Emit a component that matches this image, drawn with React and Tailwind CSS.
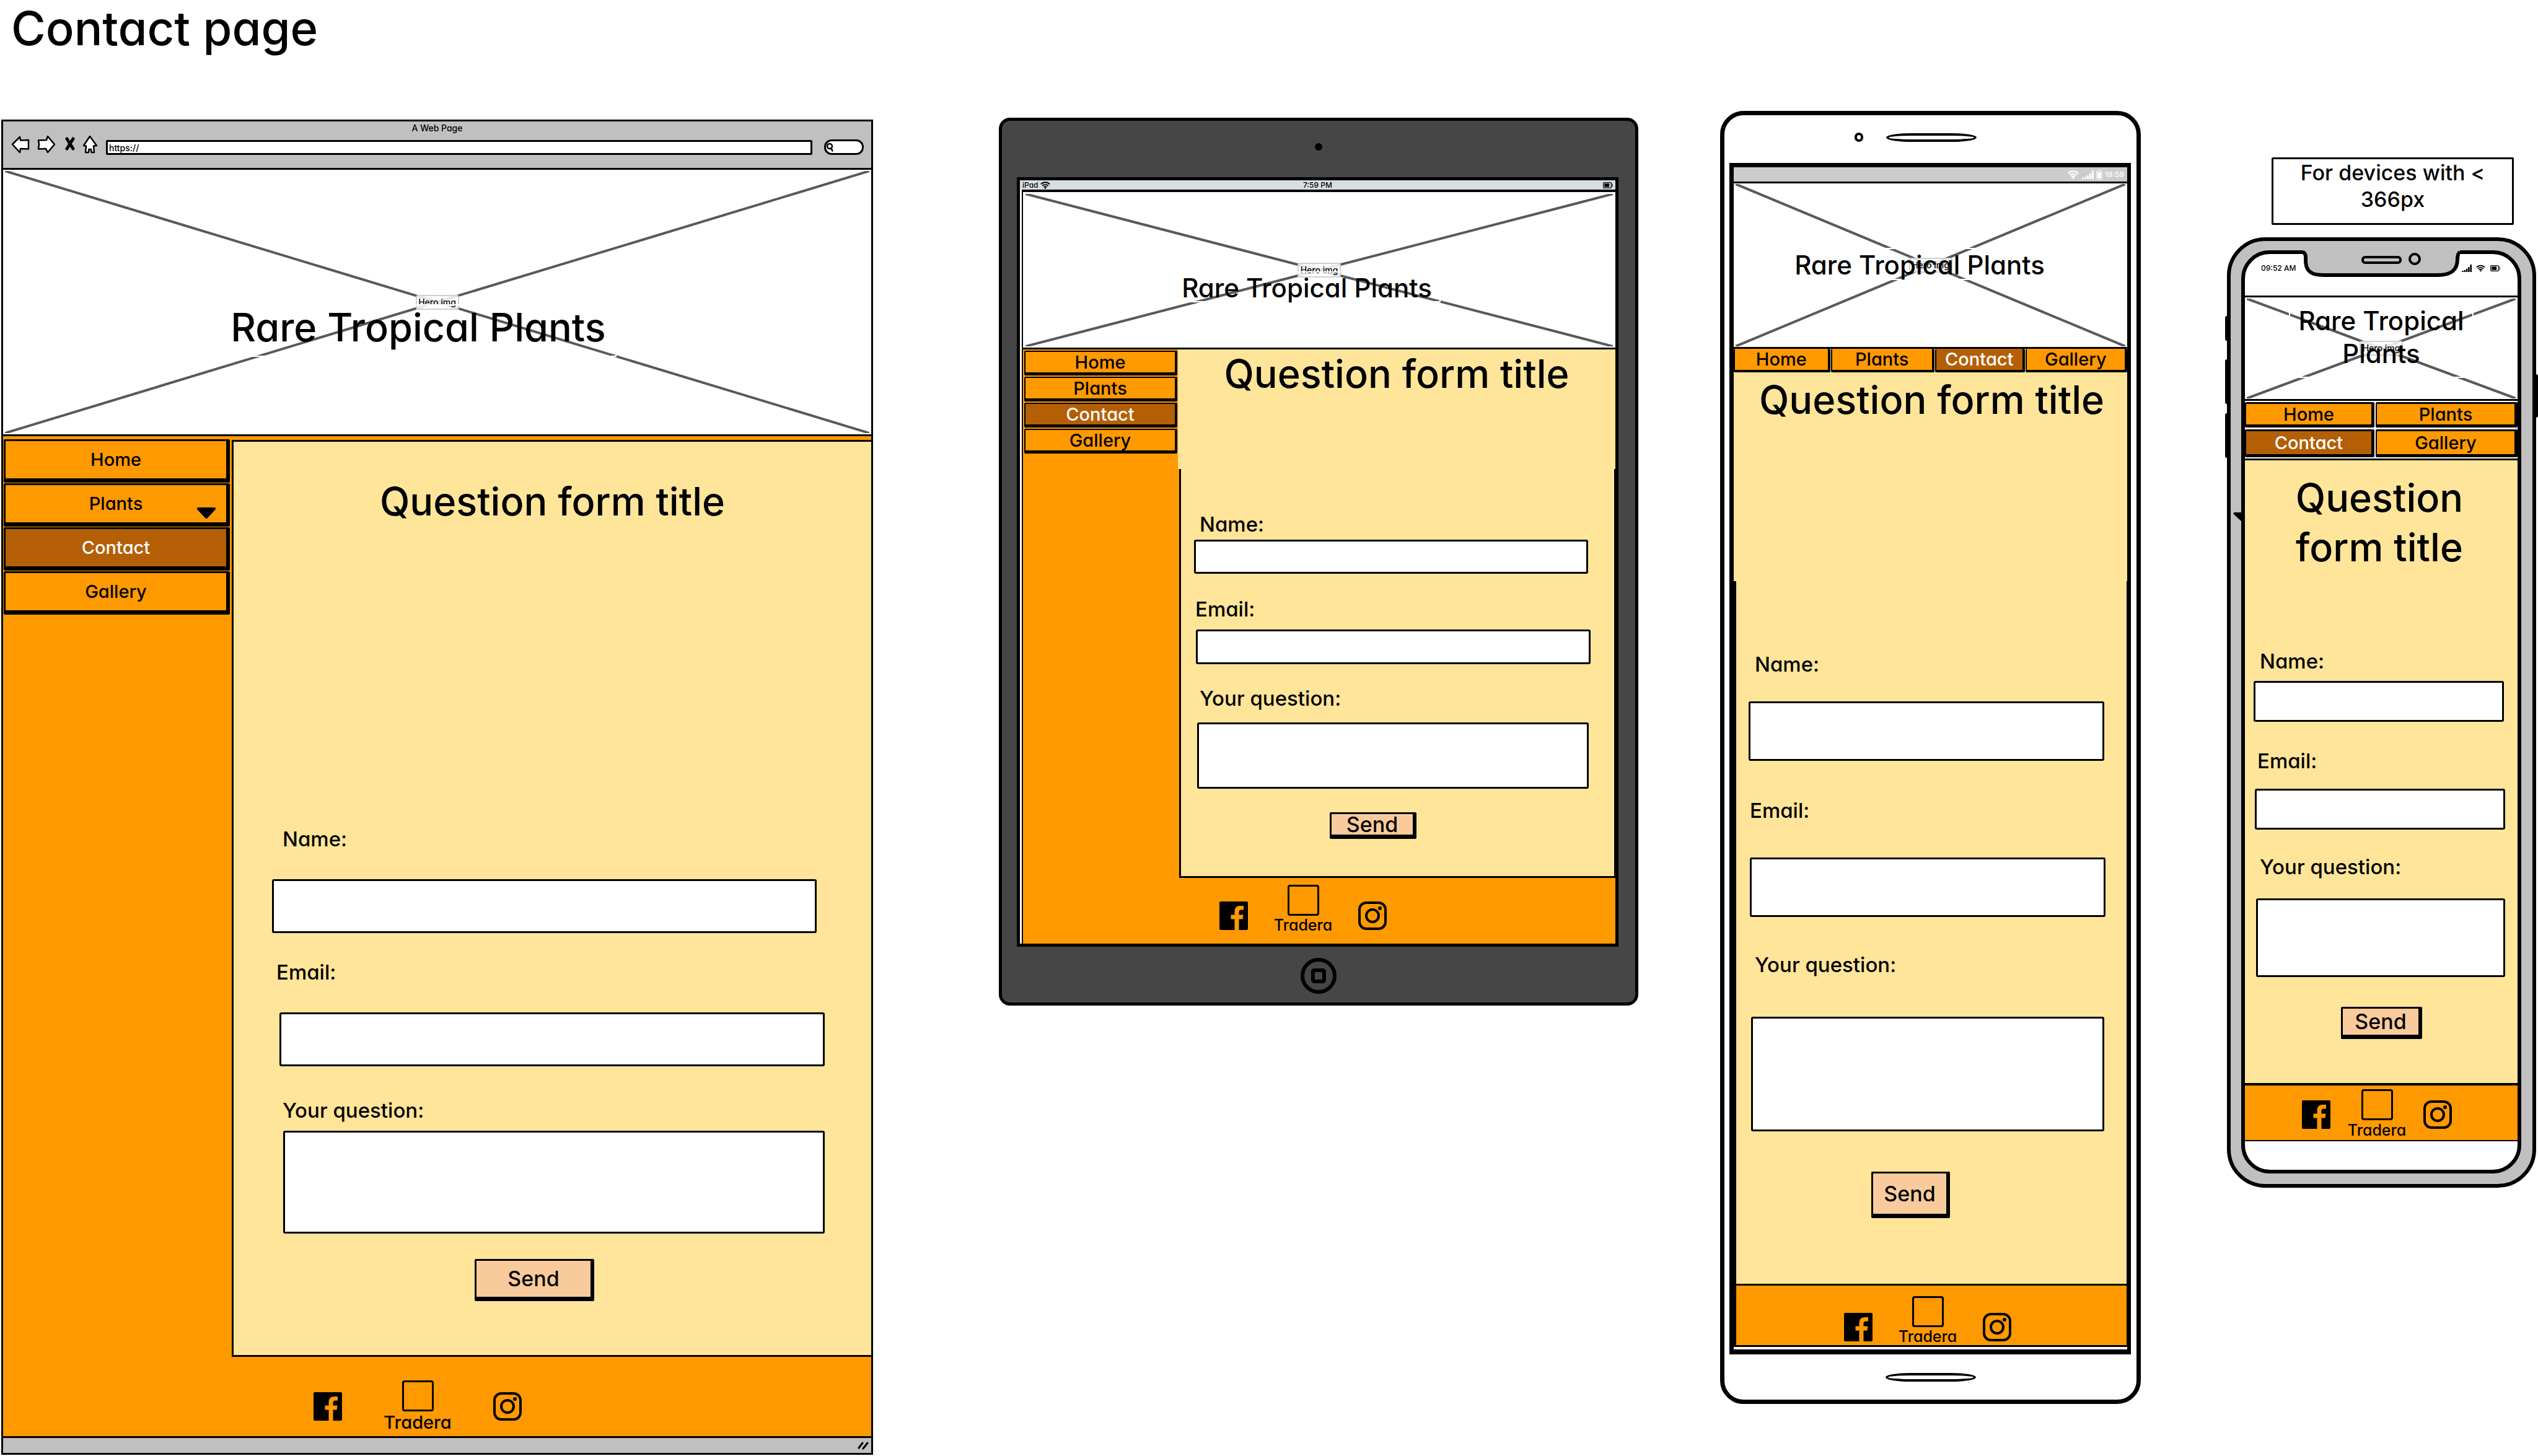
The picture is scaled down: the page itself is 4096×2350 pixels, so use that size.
import React from "react";

/* ---------- small drawings ---------- */

function FacebookIcon() {
  return (
    <svg viewBox="0 0 46 46" className="block size-[46px]" aria-hidden="true">
      <rect width="46" height="46" rx="2" fill="#000" />
      <path
        d="M24.500 46V28.500H18.500V21.500H24.500V16.500C24.500 10 28 7 33.500 7H39V13.500H35.500C32.500 13.500 31.500 15 31.500 17.500V21.500H38.500L37.500 28.500H31.500V46Z"
        fill="#ff9900"
      />
    </svg>
  );
}

function InstagramIcon() {
  return (
    <svg viewBox="0 0 46 46" className="block size-[46px]" fill="none" stroke="#000" aria-hidden="true">
      <rect x="2" y="2" width="42" height="42" rx="11" strokeWidth="4" />
      <circle cx="23" cy="23" r="10" strokeWidth="4" />
      <circle cx="35" cy="11" r="3" fill="#000" stroke="none" />
    </svg>
  );
}

function WifiIcon({ className }) {
  return (
    <svg viewBox="0 0 20 15" className={className} fill="none" stroke="currentColor" strokeWidth="2.400" aria-hidden="true">
      <path d="M1 5.500C6 .3 14 .3 19 5.500" />
      <path d="M4 8.700C7.500 5.200 12.500 5.200 16 8.700" />
      <path d="M6.800 11.400C8.700 9.600 11.300 9.600 13.200 11.400" />
      <circle cx="10" cy="13.400" r="1.500" fill="currentColor" stroke="none" />
    </svg>
  );
}

function SignalIcon({ className }) {
  return (
    <svg viewBox="0 0 19 14" className={className} fill="currentColor" aria-hidden="true">
      <path d="M0 12h3v2H0zM4 10.500h3V14H4zM8 8h3v6H8zM12 4.500h3V14h-3zM16 0h3v14h-3z" />
    </svg>
  );
}

function BatteryIcon({ className }) {
  return (
    <svg viewBox="0 0 16 10" className={className} aria-hidden="true">
      <rect x=".7" y=".7" width="12.600" height="8.600" rx="1" fill="none" stroke="currentColor" strokeWidth="1.200" />
      <rect x="2.200" y="2.200" width="8" height="5.600" fill="currentColor" />
      <path d="M14 2.500q1.500 0 1.500 2.500t-1.500 2.500" fill="none" stroke="currentColor" />
    </svg>
  );
}

function UprightBatteryIcon() {
  return (
    <svg viewBox="0 0 10 16" className="h-4 w-2.5" aria-hidden="true">
      <path d="M3 1.500V.5h4v1h1.500q1 0 1 1v12q0 1-1 1h-7q-1 0-1-1v-12q0-1 1-1z" fill="none" stroke="currentColor" />
      <rect x="2" y="3.500" width="6" height="10.500" fill="currentColor" />
    </svg>
  );
}

/* ---------- shared parts ---------- */

function Hero({ className, titleClass, lineInset, children }) {
  return (
    <header className={"relative grid place-items-center border-black bg-white " + className}>
      <svg
        viewBox="0 0 100 100"
        preserveAspectRatio="none"
        className={"absolute " + lineInset}
        stroke="#595959"
        strokeWidth="4"
        aria-hidden="true"
      >
        <path d="M0 0L100 100M100 0L0 100" vectorEffect="non-scaling-stroke" />
      </svg>
      <span className="relative h-6 w-[70px] rounded-[4px] border-2 border-[#cfcfcf] bg-white/85 text-center text-[14px] leading-5">
        Hero img
      </span>
      <h2 className={"absolute border-2 border-white text-center " + titleClass}>{children}</h2>
    </header>
  );
}

const PAGES = ["Home", "Plants", "Contact", "Gallery"];

function Nav({ className, linkClass, caret }) {
  return (
    <nav className={className}>
      {PAGES.map((page) => (
        <a
          key={page}
          href={"#" + page.toLowerCase()}
          aria-current={page === "Contact" ? "page" : undefined}
          className={
            "relative flex items-center justify-center rounded-[2px] border-black text-[29px] leading-8 " +
            (page === "Contact" ? "bg-[#b45f06] text-white " : "bg-[#ff9900] text-black ") +
            linkClass
          }
        >
          {page}
          {caret && page === "Plants" && (
            <svg viewBox="0 0 32 18" className="absolute right-4 bottom-1.5 h-[18px] w-8" aria-hidden="true">
              <path d="M3 0H29Q33 1 30 4L18 17Q16 19 14 17L2 4Q-1 1 3 0Z" />
            </svg>
          )}
        </a>
      ))}
    </nav>
  );
}

function QuestionForm({ id, s }) {
  return (
    <form className={"flex flex-col border-black bg-[#ffe599] " + s.form} onSubmit={(e) => e.preventDefault()}>
      <label htmlFor={id + "-name"} className={"h-10 text-[33px] leading-[42px] " + s.nameLabel}>Name:</label>
      <input id={id + "-name"} type="text" className={"min-w-0 rounded-[3px] border-[3px] border-black bg-white px-3 text-[33px] " + s.name} />
      <label htmlFor={id + "-email"} className={"h-10 text-[33px] leading-[42px] " + s.emailLabel}>Email:</label>
      <input id={id + "-email"} type="email" className={"min-w-0 rounded-[3px] border-[3px] border-black bg-white px-3 text-[33px] " + s.email} />
      <label htmlFor={id + "-question"} className={"h-10 text-[33px] leading-[42px] " + s.questionLabel}>Your question:</label>
      <textarea id={id + "-question"} className={"block min-w-0 resize-none rounded-[3px] border-[3px] border-black bg-white px-3 text-[33px] " + s.question} />
      <button
        type="submit"
        className={"flex items-center justify-center self-start rounded-[2px] border-[3px] border-r-[6px] border-b-[7px] border-black bg-[#f9cb9c] text-[34px] leading-8 " + s.send}
      >
        Send
      </button>
    </form>
  );
}

function Socials({ className, iconDrop, columnClass }) {
  return (
    <footer className={"flex items-start border-black bg-[#ff9900] " + className}>
      <a href="#facebook" aria-label="Facebook" className={iconDrop}><FacebookIcon /></a>
      <a href="#tradera" className={"flex flex-col items-center " + columnClass}>
        <span className="h-[50px] w-[51px] rounded-[4px] border-[3px] border-black" />
        <span className="leading-[30px]">Tradera</span>
      </a>
      <a href="#instagram" aria-label="Instagram" className={iconDrop}><InstagramIcon /></a>
    </footer>
  );
}

/* ---------- devices ---------- */

function BrowserWindow() {
  return (
    <article className="mt-[14px] ml-0.5 border-[3px] border-black">
      <div className="h-[75px] bg-[#c0c0c0]">
        <p className="text-center text-[14px] leading-[22px]">A Web Page</p>
        <div className="flex items-start pr-3 pl-[13px]">
          <button type="button" aria-label="Back">
            <svg viewBox="0 0 30 30" className="block h-[30px] w-[30px]" fill="#fff" stroke="#000" strokeWidth="2.500" strokeLinejoin="round">
              <path d="M2 15L14 3L15 8.500L28 8V22.500L15 22L14 28Z" />
            </svg>
          </button>
          <button type="button" aria-label="Forward" className="ml-3">
            <svg viewBox="0 0 30 30" className="block h-[30px] w-[30px]" fill="#fff" stroke="#000" strokeWidth="2.500" strokeLinejoin="round">
              <path d="M28 15L17 2L15 8L2 8.500L3 15L2 22.500L14 22L17 28Z" />
            </svg>
          </button>
          <button type="button" aria-label="Stop" className="ml-[15px]">
            <svg viewBox="0 0 16 30" className="block h-[30px] w-4" fill="none" stroke="#000" strokeWidth="5" strokeLinecap="round">
              <path d="M3 6L13 22M13 6L3 22" />
            </svg>
          </button>
          <button type="button" aria-label="Home" className="ml-3">
            <svg viewBox="0 0 24 30" className="block h-[30px] w-6" fill="#fff" stroke="#000" strokeWidth="2.500" strokeLinejoin="round">
              <path d="M12 2L23 17L18 17.500L19 28H14.500L14 23H10.500L10 28H5L6 17.500L2 17Z" />
            </svg>
          </button>
          <input
            aria-label="Address"
            defaultValue="https://"
            className="mt-2 ml-[14px] h-6 min-w-0 flex-1 rounded-[2px] border-[3px] border-black bg-white px-0.5 text-[14px] leading-4"
          />
          <label className="mt-[7px] ml-[19px] flex h-[25px] w-16 items-center rounded-xl border-[3px] border-black bg-white">
            <svg viewBox="0 0 14 16" className="h-4 w-3.5 shrink-0" fill="none" stroke="#000" strokeWidth="2.500" strokeLinecap="round" aria-hidden="true">
              <circle cx="6" cy="6" r="4" />
              <path d="M8.500 9.500L10.500 13.500" />
            </svg>
            <input aria-label="Search" className="w-10 min-w-0 bg-transparent text-[12px]" />
          </label>
        </div>
      </div>

      <Hero
        className="h-[433px] border-y-[3px]"
        lineInset="inset-x-[3px] inset-y-0.5 h-[423px] w-[calc(100%-6px)]"
        titleClass="top-[217px] left-[350px] h-[85px] w-[640px] text-[63px] leading-[70px] whitespace-nowrap"
      >
        Rare Tropical Plants
      </Hero>

      <div className="flex bg-[#ff9900] pt-1">
        <Nav
          caret
          className="flex w-[369px] flex-col gap-px pt-px pr-[3px] pl-px"
          linkClass="h-[70px] border-[3px] border-r-[6px] border-b-[7px]"
        />
        <section className="mt-0.5 min-w-0 flex-1 border-y-[3px] border-l-[3px] border-black bg-[#ffe599]">
          <h2 className="mt-14 text-center text-[63px] leading-[80px]">Question form title</h2>
          <QuestionForm
            id="browser"
            s={{
              form: "pt-[484px] pb-[87px]",
              nameLabel: "ml-[79px]",
              name: "mt-[46px] mr-[88px] ml-[62px] h-[87px]",
              emailLabel: "mt-[42px] ml-[69px]",
              email: "mt-[46px] mr-[75px] ml-[74px] h-[87px]",
              questionLabel: "mt-[50px] ml-[79px]",
              question: "mt-[14px] mr-[75px] ml-20 h-[166px]",
              send: "mt-[41px] ml-[389px] h-[68px] w-[193px]",
            }}
          />
        </section>
      </div>

      <Socials
        className="h-32 gap-[68px] pt-[38px] pl-[501px]"
        iconDrop="mt-[19px]"
        columnClass="w-[108px] gap-[3px] text-[29px]"
      />
      <div className="flex h-[27px] items-center justify-end border-t-[3px] border-black bg-[#c0c0c0] pr-1">
        <svg viewBox="0 0 18 14" className="h-3.5 w-[18px]" stroke="#000" strokeWidth="3" strokeLinecap="round" aria-hidden="true">
          <path d="M2 11L8 3M9 12L16 3" />
        </svg>
      </div>
    </article>
  );
}

function Tablet() {
  return (
    <article className="mt-[11px] rounded-[18px] border-[5px] border-black bg-[#464646]">
      <div className="flex h-[91px] justify-center pt-9">
        <span className="size-3 rounded-full bg-black" />
      </div>
      <div className="mr-[27px] ml-6 border-[5px] border-black bg-white">
        <div className="grid h-[15px] grid-cols-3 items-center bg-[#d6dee1] px-1 text-[12px] leading-[15px]">
          <span className="flex items-center gap-1">iPad <WifiIcon className="h-3 w-4" /></span>
          <span className="text-center">7:59 PM</span>
          <BatteryIcon className="h-2.5 w-4 justify-self-end" />
        </div>
        <div className="ml-[3px] border-l-2 border-black">
          <Hero
            className="h-[258px] border-t-4 border-b-[3px]"
            lineInset="inset-x-1 top-[3px] h-[246px] w-[calc(100%-8px)]"
            titleClass="top-[128px] left-[242px] h-[50px] w-[432px] text-[42px] leading-[50px] whitespace-nowrap"
          >
            Rare Tropical Plants
          </Hero>
          <div className="flex bg-[#ff9900]">
            <Nav
              className="flex w-[250px] flex-col gap-0.5 pt-0.5 pr-px pl-0.5"
              linkClass="h-10 border-2 border-r-4 border-b-[5px]"
            />
            <section className="min-w-0 flex-1">
              <div className="h-[193px] bg-[#ffe599]">
                <h2 className="text-center text-[63px] leading-[78px]">Question form title</h2>
              </div>
              <QuestionForm
                id="tablet"
                s={{
                  form: "ml-0.5 border-r-2 border-b-[3px] border-l-[3px] pt-[68px] pb-[60px]",
                  nameLabel: "ml-[30px]",
                  name: "mt-1.5 mr-[42px] ml-[21px] h-[55px]",
                  emailLabel: "mt-9 ml-[23px]",
                  email: "mt-[14px] mr-[38px] ml-6 h-14",
                  questionLabel: "mt-[34px] ml-[30px]",
                  question: "mt-5 mr-[41px] ml-[26px] h-[107px]",
                  send: "mt-[38px] ml-60 h-[43px] w-[140px]",
                }}
              />
            </section>
          </div>
          <Socials
            className="h-[106px] gap-[43px] pt-[11px] pl-[317px]"
            iconDrop="mt-[27px]"
            columnClass="w-[92px] text-[25px]"
          />
        </div>
      </div>
      <div className="flex justify-center pt-[18px] pb-[14px]">
        <button type="button" aria-label="Home button" className="grid size-[58px] place-items-center rounded-full border-[6px] border-black">
          <span className="size-6 rounded-[5px] border-[6px] border-black" />
        </button>
      </div>
    </article>
  );
}

function Phone() {
  return (
    <article className="rounded-[38px] border-[7px] border-black bg-white">
      <div className="mt-7 flex h-[15px] items-center gap-[37px] pl-[210px]">
        <span className="h-[15px] w-[14px] rounded-full border-4 border-black" />
        <span className="h-[14px] w-[146px] rounded-[40px/7px] border-4 border-black" />
      </div>
      <div className="mt-[34px] mr-[9px] ml-2 border-t-[7px] border-r-[6px] border-b-8 border-l-[7px] border-black pb-1">
        <div className="flex h-[23px] items-center justify-end gap-1 bg-[#cccccc] pr-[5px] text-[12px] text-white">
          <WifiIcon className="h-3.5 w-5" />
          <SignalIcon className="h-3.5 w-[19px]" />
          <UprightBatteryIcon />
          <span>19:59</span>
        </div>
        <Hero
          className="h-[270px] border-y-[3px]"
          lineInset="inset-x-[3px] top-px h-[262px] w-[calc(100%-6px)]"
          titleClass="top-[104px] left-[84px] h-[52px] w-[432px] text-[42px] leading-[52px] whitespace-nowrap"
        >
          Rare Tropical Plants
        </Hero>
        <Nav
          className="grid grid-cols-[156fr_168fr_145fr_165fr] gap-px bg-[#ffe599]"
          linkClass="h-[38px] border-x-2 border-r-4 border-b-4"
        />
        <div className="h-[337px] bg-[#ffe599] pt-[5px] pl-1">
          <h2 className="text-center text-[63px] leading-[78px]">Question form title</h2>
        </div>
        <QuestionForm
          id="phone"
          s={{
            form: "border-r border-b-[3px] border-l-4 pt-[113px] pb-[106px]",
            nameLabel: "ml-[30px]",
            name: "mt-[41px] mr-9 ml-5 h-24",
            emailLabel: "mt-[59px] ml-[22px]",
            email: "mt-[57px] mr-[34px] ml-[22px] h-24",
            questionLabel: "mt-14 ml-[30px]",
            question: "mt-[65px] mr-9 ml-6 h-[185px]",
            send: "mt-[65px] ml-[218px] h-[75px] w-[127px]",
          }}
        />
        <Socials
          className="h-[99px] gap-[43px] border-r border-b-[3px] border-l-4 pt-[17px] pl-[174px]"
          iconDrop="mt-[27px]"
          columnClass="w-[92px] text-[25px]"
        />
      </div>
      <div className="mt-[30px] mb-[29px] flex justify-center">
        <span className="h-[14px] w-[146px] rounded-[40px/7px] border-4 border-black" />
      </div>
    </article>
  );
}

function SmallPhone() {
  return (
    <div className="mt-[75px]">
      <p className="mr-[39px] ml-[75px] h-[109px] rounded-[2px] border-[3px] border-black px-8 text-center text-[34px] leading-[43px]">
        For devices with &lt; 366px
      </p>
      <article className="relative mx-[3px] mt-5 rounded-[62px] border-[6px] border-black bg-[#c0c0c0]">
        <span className="absolute top-[121px] -left-[9px] h-10 w-1.5 rounded-l-[3px] bg-black" />
        <span className="absolute top-[191px] -left-[9px] h-[72px] w-1.5 rounded-l-[3px] bg-black" />
        <span className="absolute top-[278px] -left-[9px] h-[72px] w-1.5 rounded-l-[3px] bg-black" />
        <span className="absolute top-[215px] -right-[9px] h-[70px] w-1.5 rounded-r-[3px] bg-black" />
        <svg viewBox="0 0 14 16" className="absolute top-[437px] left-1 h-4 w-3.5" aria-hidden="true">
          <path d="M2 1H14V16L1 4Q0 1 2 1Z" />
        </svg>
        <div className="relative mt-[15px] mr-[18px] mb-[17px] ml-[17px] rounded-[46px] border-[6px] border-black bg-white">
          <svg viewBox="0 0 254 48" className="absolute -top-2 left-[93px] h-12 w-[254px]" aria-hidden="true">
            <path d="M0 5Q6 6 5 18C5 36 14 42 34 42H218C240 42 250 34 250 16Q250 8 254 5V0H0Z" fill="#c0c0c0" />
            <path d="M0 5Q6 6 5 18C5 36 14 42 34 42H218C240 42 250 34 250 16Q250 8 254 5" fill="none" stroke="#000" strokeWidth="6" />
            <rect x="97" y="13" width="61" height="9" rx="4" fill="#c0c0c0" stroke="#000" strokeWidth="4" />
            <circle cx="181" cy="16" r="8" fill="#c0c0c0" stroke="#000" strokeWidth="4" />
          </svg>
          <div className="mb-[21px] flex h-[46px] items-center pr-7 pl-[26px] text-[12px]">
            <span className="flex-1">09:52 AM</span>
            <SignalIcon className="h-3 w-4" />
            <WifiIcon className="ml-[7px] h-3 w-[15px]" />
            <BatteryIcon className="ml-2 h-2.5 w-4" />
          </div>
          <Hero
            className="h-[170px] border-[3px] border-x-0"
            lineInset="inset-x-[3px] top-0.5 h-[161px] w-[calc(100%-6px)]"
            titleClass="top-[9px] left-[71px] h-[121px] w-[298px] text-[42px] leading-[53px]"
          >
            Rare Tropical Plants
          </Hero>
          <Nav
            className="grid grid-cols-[209fr_229fr] grid-rows-[41px_45px] gap-x-0.5 gap-y-[3px] py-0.5"
            linkClass="border-2 border-t-[3px] border-r-[5px] border-b-[5px]"
          />
          <div className="border-t-[3px] border-black bg-[#ffe599] pt-5 pr-[72px] pl-[66px]">
            <h2 className="text-center text-[63px] leading-[80px]">Question form title</h2>
          </div>
          <QuestionForm
            id="small"
            s={{
              form: "pt-[123px] pb-[71px]",
              nameLabel: "ml-6",
              name: "mt-[13px] mr-[22px] ml-[14px] h-[66px]",
              emailLabel: "mt-[42px] ml-5",
              email: "mt-[26px] mr-5 ml-4 h-[66px]",
              questionLabel: "mt-[39px] ml-6",
              question: "mt-8 mr-5 ml-[18px] h-[127px]",
              send: "mt-12 ml-[155px] h-[52px] w-[131px]",
            }}
          />
          <Socials
            className="mb-[46px] h-[94px] gap-[29px] border-t-4 border-b-2 pt-1.5 pl-[92px]"
            iconDrop="mt-[18px]"
            columnClass="w-[92px] gap-px text-[25px]"
          />
        </div>
      </article>
    </div>
  );
}

export default function App() {
  return (
    <main className="min-h-screen overflow-hidden bg-white font-['Inter','Lato',sans-serif] font-medium text-black [font-feature-settings:'cv11','ss03']">
      <h1 className="h-[179px] pl-[18px] text-[76px] leading-[90px]">Contact page</h1>
      <div className="grid grid-cols-[minmax(0,1409fr)_203fr_minmax(0,1032fr)_132fr_minmax(0,679fr)_136fr_minmax(0,505fr)] items-start">
        <BrowserWindow />
        <span />
        <Tablet />
        <span />
        <Phone />
        <span />
        <SmallPhone />
      </div>
    </main>
  );
}
